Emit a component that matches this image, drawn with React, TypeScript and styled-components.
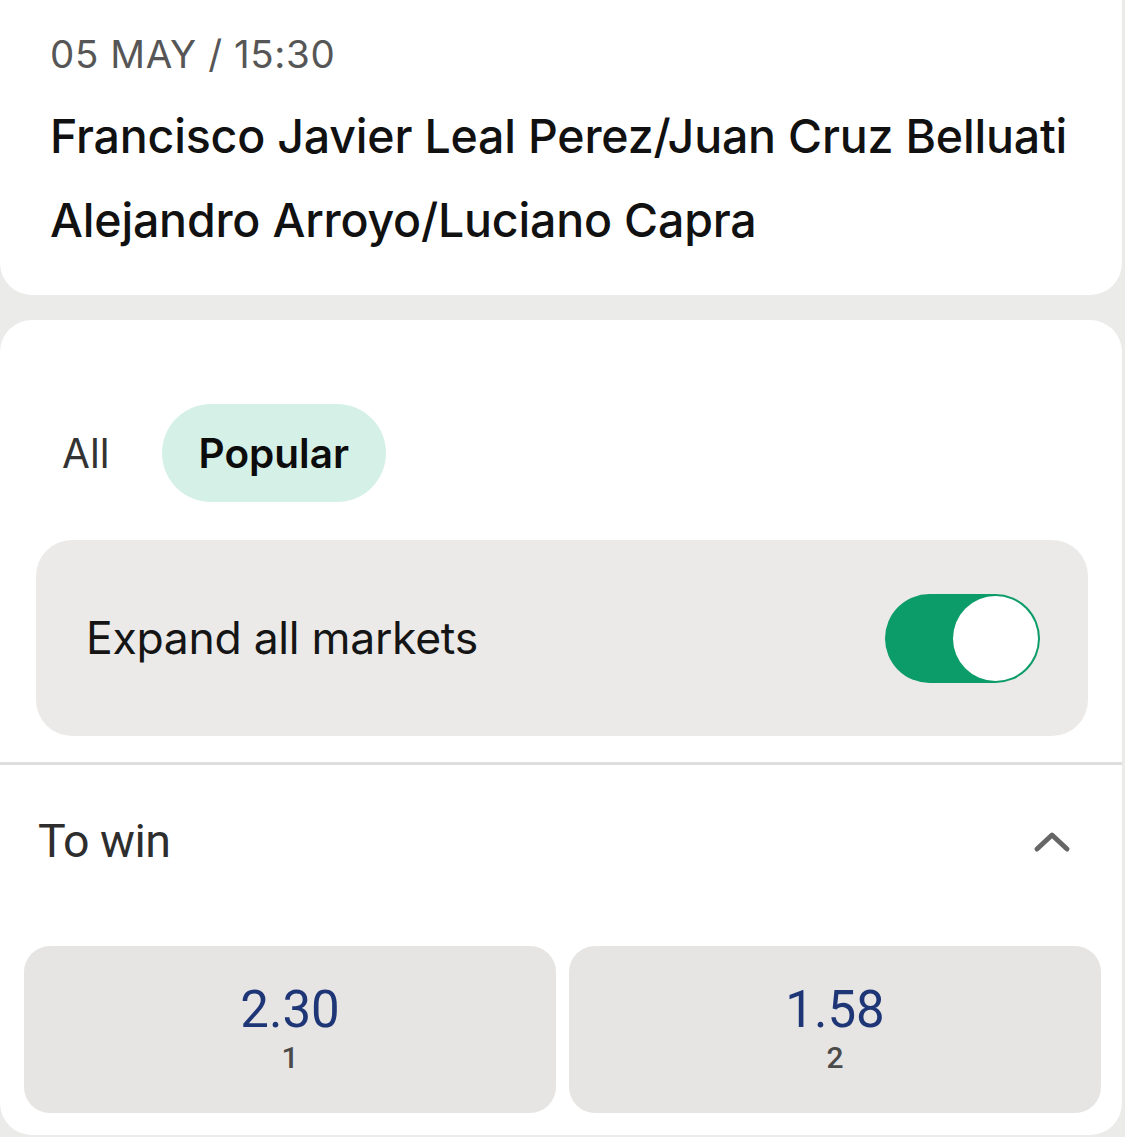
import React, { useState } from "react";
import styled, { createGlobalStyle } from "styled-components";

const GlobalStyle = createGlobalStyle`
  html, body {
    margin: 0;
    padding: 0;
    background: #ebebea;
  }
  body {
    font-family: Inter, "Noto Sans", sans-serif;
    -webkit-font-smoothing: antialiased;
  }
`;

const Page = styled.div`
  display: flex;
  flex-direction: column;
  gap: 25px;
  min-height: 1137px;
  box-sizing: border-box;
  padding-right: 3px;
`;

const HeaderCard = styled.header`
  background: #fff;
  border-radius: 0 0 32px 32px;
  height: 295px;
  box-sizing: border-box;
  padding: 30px 50px 0;
`;

const DateLine = styled.div`
  font-size: 38.5px;
  line-height: 48px;
  color: #565656;
  letter-spacing: 0.6px;
`;

const TeamList = styled.div`
  margin-top: 16px;
`;

const TeamName = styled.div`
  font-size: 46.5px;
  font-weight: 500;
  color: #111;
  line-height: 84px;
  letter-spacing: -0.2px;
`;

const MarketsCard = styled.section`
  background: #fff;
  border-radius: 32px;
  height: 815px;
  box-sizing: border-box;
  padding-top: 84px;
  overflow: hidden;
`;

const TabRow = styled.div`
  display: flex;
  gap: 15px;
  padding-left: 25px;
`;

const Tab = styled.button<{ $active?: boolean }>`
  border: 0;
  height: 98px;
  border-radius: 49px;
  padding: 0 37px;
  font-family: Inter, "Noto Sans", sans-serif;
  font-size: 40.5px;
  font-weight: ${(p) => (p.$active ? 600 : 400)};
  color: ${(p) => (p.$active ? "#0c0c0c" : "#333")};
  background: ${(p) => (p.$active ? "#d5f0e6" : "transparent")};
  cursor: pointer;
`;

const ExpandBox = styled.div`
  margin: 38px 34px 0 36px;
  height: 196px;
  border-radius: 36px;
  background: #ebeae8;
  display: flex;
  align-items: center;
  justify-content: space-between;
  padding: 0 48px 0 50px;
`;

const ExpandLabel = styled.span`
  font-size: 44.5px;
  color: #151515;
  letter-spacing: -0.3px;
`;

const Toggle = styled.button<{ $on: boolean }>`
  width: 155px;
  height: 89px;
  border-radius: 45px;
  border: 0;
  padding: 2px;
  display: flex;
  justify-content: ${(p) => (p.$on ? "flex-end" : "flex-start")};
  align-items: center;
  background: ${(p) => (p.$on ? "#0c9c69" : "#c9c9c9")};
  cursor: pointer;
  box-sizing: border-box;
`;

const Knob = styled.span`
  width: 85px;
  height: 85px;
  border-radius: 50%;
  background: #fff;
`;

const Divider = styled.hr`
  margin: 26px 0 0;
  border: 0;
  height: 3px;
  background: #dedede;
`;

const MarketHeader = styled.div`
  height: 152px;
  display: flex;
  align-items: center;
  justify-content: space-between;
  padding: 0 51px 0 38px;
`;

const MarketTitle = styled.span`
  font-family: Roboto, "Noto Sans", sans-serif;
  font-size: 46.5px;
  color: #2e2e2e;
  letter-spacing: -0.5px;
`;

const OddsGrid = styled.div`
  display: grid;
  grid-template-columns: 1fr 1fr;
  gap: 13px;
  padding: 0 21px 0 24px;
  margin-top: 29px;
`;

const OddsButton = styled.button`
  height: 167px;
  border: 0;
  border-radius: 26px;
  background: #e6e5e3;
  display: flex;
  flex-direction: column;
  align-items: center;
  justify-content: center;
  gap: 6px;
  font-family: Roboto, "Noto Sans", sans-serif;
  cursor: pointer;
  padding: 0 0 2px;
`;

const OddsValue = styled.span`
  font-size: 51px;
  line-height: 52px;
  color: #1e3676;
`;

const OddsLabel = styled.span`
  font-size: 30px;
  line-height: 32px;
  font-weight: 500;
  color: #4a4a4a;
`;

const ChevronUp = () => (
  <svg width="38" height="26" viewBox="0 0 38 26" fill="none">
    <polyline
      points="4,21 19,7 34,21"
      stroke="#666"
      strokeWidth="5"
      strokeLinecap="round"
      strokeLinejoin="round"
    />
  </svg>
);

const odds = [
  { value: "2.30", label: "1" },
  { value: "1.58", label: "2" },
];

export default function App() {
  const [tab, setTab] = useState("Popular");
  const [expanded, setExpanded] = useState(true);

  return (
    <>
      <GlobalStyle />
      <Page>
        <HeaderCard>
          <DateLine>05 MAY / 15:30</DateLine>
          <TeamList>
            <TeamName>Francisco Javier Leal Perez/Juan Cruz Belluati</TeamName>
            <TeamName>Alejandro Arroyo/Luciano Capra</TeamName>
          </TeamList>
        </HeaderCard>
        <MarketsCard>
          <TabRow>
            {["All", "Popular"].map((t) => (
              <Tab key={t} $active={tab === t} onClick={() => setTab(t)}>
                {t}
              </Tab>
            ))}
          </TabRow>
          <ExpandBox>
            <ExpandLabel>Expand all markets</ExpandLabel>
            <Toggle $on={expanded} onClick={() => setExpanded(!expanded)}>
              <Knob />
            </Toggle>
          </ExpandBox>
          <Divider />
          <MarketHeader>
            <MarketTitle>To win</MarketTitle>
            <ChevronUp />
          </MarketHeader>
          <OddsGrid>
            {odds.map((o) => (
              <OddsButton key={o.label}>
                <OddsValue>{o.value}</OddsValue>
                <OddsLabel>{o.label}</OddsLabel>
              </OddsButton>
            ))}
          </OddsGrid>
        </MarketsCard>
      </Page>
    </>
  );
}
